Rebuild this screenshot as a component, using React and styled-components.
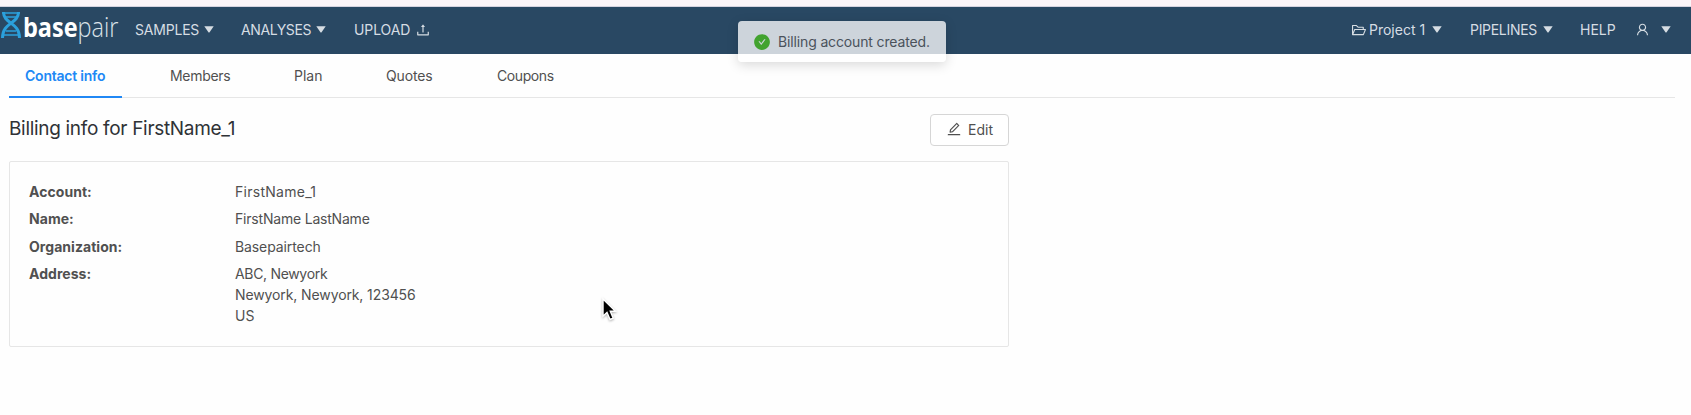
import React from "react";
import styled, { createGlobalStyle } from "styled-components";
import {
  AiFillCheckCircle,
  AiOutlineEdit,
  AiOutlineFolderOpen,
  AiOutlineUpload,
  AiOutlineUser,
} from "react-icons/ai";

const GlobalStyle = createGlobalStyle`
  *, *::before, *::after { box-sizing: border-box; }
  body {
    margin: 0;
    background: #fefefe;
    color: #505050;
    font-family: Inter, "Liberation Sans", sans-serif;
    font-size: 14px;
    line-height: 21px;
    overflow: hidden;
  }
`;

const Page = styled.div`
  position: relative;
  height: 415px;
  overflow: hidden;
`;

const TopStrip = styled.div`
  height: 7px;
  background: #fbf5f8;
  border-bottom: 1px solid #d5d3df;
`;

const NavBar = styled.nav`
  display: flex;
  justify-content: space-between;
  height: 47px;
  background: #294863;
  color: #d6dde3;
`;

const NavGroup = styled.div`
  display: flex;
  align-items: center;
  height: 45px;
`;

const NavItem = styled.a`
  display: flex;
  align-items: center;
  width: ${(p) => p.$width}px;
  white-space: nowrap;
  letter-spacing: ${(p) => p.$spacing || 0}px;
`;

const NavLabel = styled.span`
  width: ${(p) => p.$width}px;

  svg {
    display: block;
  }
`;

const Logo = styled.svg`
  display: block;
  width: 135px;
  height: 46px;
`;

const CaretIcon = styled.svg`
  width: 10px;
  height: 7px;
  flex: none;
  margin-top: -1px;
  fill: currentColor;
`;

const Caret = () => (
  <CaretIcon viewBox="0 0 10 7">
    <path d="M0.3 0.3H9.7L5.6 6.2Q5 6.8 4.4 6.2Z" />
  </CaretIcon>
);

const TabBar = styled.div`
  display: flex;
  gap: 32px;
  height: 44px;
  margin: 0 16px 0 9px;
  border-bottom: 1px solid #e6e6e6;
`;

const Tab = styled.a`
  width: ${(p) => p.$width}px;
  height: 44px;
  padding: 11px 0 0 16px;
  white-space: nowrap;
  letter-spacing: ${(p) => p.$spacing || 0}px;
  font-weight: ${(p) => (p.$active ? 600 : 400)};
  color: ${(p) => (p.$active ? "#2088f5" : "#505050")};
  border-bottom: ${(p) => (p.$active ? "2px solid #2088f5" : "none")};
`;

const Content = styled.main`
  width: 1000px;
  margin: 16px 0 0 9px;
`;

const Heading = styled.div`
  display: flex;
  justify-content: space-between;
  height: 47px;
`;

const Title = styled.h1`
  margin: 1px 0 0;
  font-size: 19px;
  line-height: 28px;
  font-weight: 400;
  letter-spacing: -0.31px;
  color: #2f3236;
`;

const EditButton = styled.button`
  display: flex;
  align-items: center;
  gap: 6px;
  width: 79px;
  height: 32px;
  padding: 0 0 2px 15px;
  font: inherit;
  color: #505050;
  background: #fff;
  border: 1px solid #d6d6d6;
  border-radius: 4px;
`;

const Card = styled.section`
  display: flex;
  flex-direction: column;
  gap: 6.5px;
  height: 186px;
  padding: 18.5px 19px;
  border: 1px solid #e6e6e6;
  border-radius: 2px;
`;

const Row = styled.div`
  display: grid;
  grid-template-columns: 206px 1fr;
`;

const Label = styled.span`
  font-weight: 700;
  letter-spacing: 0.05px;
`;

const Line = styled.div`
  letter-spacing: ${(p) => p.$spacing || 0}px;
`;

const Toast = styled.div`
  position: absolute;
  left: 738px;
  top: 21px;
  display: flex;
  align-items: center;
  gap: 8px;
  width: 208px;
  height: 41px;
  padding-left: 16px;
  white-space: nowrap;
  letter-spacing: -0.14px;
  color: #4a525b;
  background: rgba(255, 255, 255, 0.77);
  border-radius: 4px;
  box-shadow: 0 3px 12px rgba(0, 0, 0, 0.15);
`;

const ToastIcon = styled(AiFillCheckCircle)`
  width: 18px;
  height: 18px;
  margin: 0 -1px;
  color: #42a32f;
`;

const Cursor = styled.svg`
  position: absolute;
  left: 601px;
  top: 297px;
  filter: drop-shadow(0 1px 1px rgba(0, 0, 0, 0.3));
`;

const tabs = [
  { label: "Contact info", width: 113, active: true, spacing: -0.22 },
  { label: "Members", width: 92, spacing: -0.3 },
  { label: "Plan", width: 60 },
  { label: "Quotes", width: 79, spacing: -0.15 },
  { label: "Coupons", width: 90, spacing: -0.4 },
];

const details = [
  { label: "Account:", lines: [{ text: "FirstName_1", spacing: 0.27 }] },
  { label: "Name:", lines: [{ text: "FirstName LastName", spacing: -0.2 }] },
  { label: "Organization:", lines: [{ text: "Basepairtech", spacing: -0.1 }] },
  {
    label: "Address:",
    lines: [
      { text: "ABC, Newyork", spacing: -0.32 },
      { text: "Newyork, Newyork, 123456", spacing: -0.11 },
      { text: "US", spacing: 0 },
    ],
  },
];

export default function App() {
  return (
    <Page>
      <GlobalStyle />
      <TopStrip />
      <NavBar>
        <NavGroup>
          <Logo viewBox="0 7 135 46">
            <g fill="none" stroke="#2ba0dc">
              <path d="M3.5 12C3.5 24 19.5 22 19.5 38" strokeWidth="3" />
              <path d="M18.5 12C18.5 24 2.5 22 2.5 38" strokeWidth="3" />
              <path d="M2 13H20M5 17H17M6 31H16M3 35H19" strokeWidth="1.5" />
            </g>
            <text x="23" y="36.5" fill="#fff" fontFamily="Open Sans" fontWeight="700" fontSize="27" textLength="95.5" lengthAdjust="spacingAndGlyphs">
              base<tspan fill="#dbe3e9" fontWeight="300">pair</tspan>
            </text>
          </Logo>
          <NavItem $width={106} $spacing={-0.2}><NavLabel $width={69}>SAMPLES</NavLabel><Caret /></NavItem>
          <NavItem $width={113} $spacing={-0.4}><NavLabel $width={75}>ANALYSES</NavLabel><Caret /></NavItem>
          <NavItem $width={80} $spacing={-0.1}><NavLabel $width={61}>UPLOAD</NavLabel><AiOutlineUpload size={16} /></NavItem>
        </NavGroup>
        <NavGroup>
          <NavItem $width={119}><NavLabel $width={18}><AiOutlineFolderOpen size={16} /></NavLabel><NavLabel $width={63}>Project 1</NavLabel><Caret /></NavItem>
          <NavItem $width={110} $spacing={-0.3}><NavLabel $width={73}>PIPELINES</NavLabel><Caret /></NavItem>
          <NavItem $width={55}>HELP</NavItem>
          <NavItem $width={56}><NavLabel $width={26}><AiOutlineUser size={15} /></NavLabel><Caret /></NavItem>
        </NavGroup>
      </NavBar>
      <TabBar>
        {tabs.map((t) => (
          <Tab key={t.label} $width={t.width} $active={t.active} $spacing={t.spacing}>{t.label}</Tab>
        ))}
      </TabBar>
      <Content>
        <Heading>
          <Title>Billing info for FirstName_1</Title>
          <EditButton><AiOutlineEdit size={16} />Edit</EditButton>
        </Heading>
        <Card>
          {details.map((d) => (
            <Row key={d.label}>
              <Label>{d.label}</Label>
              <div>
                {d.lines.map((l) => (
                  <Line key={l.text} $spacing={l.spacing}>{l.text}</Line>
                ))}
              </div>
            </Row>
          ))}
        </Card>
      </Content>
      <Toast><ToastIcon />Billing account created.</Toast>
      <Cursor width="18" height="26" viewBox="0 0 18 26">
        <path d="M2 2V19.2L6 15.5L9 22.5L12.2 21.2L9.3 14.3H14.5Z" fill="#000" stroke="#fff" strokeWidth="1.4" />
      </Cursor>
    </Page>
  );
}
